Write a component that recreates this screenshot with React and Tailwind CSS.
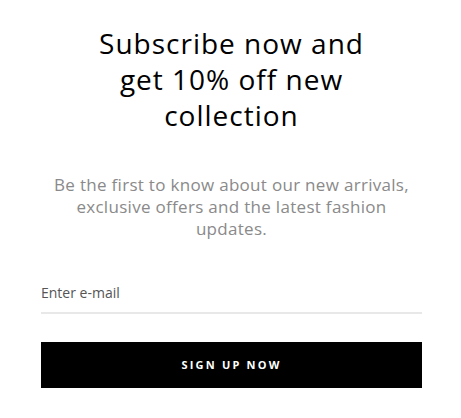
export default function App() {
  return (
    <div className="min-h-screen bg-white font-['Open_Sans','Liberation_Sans',sans-serif]">
      <section className="flex w-[461px] flex-col pl-[41px] pr-[39px] pt-[25px]">
        <h2 className="text-center text-[28px] font-normal leading-[36px] tracking-[1px] text-black">
          Subscribe now and
          <br />
          get 10% off new
          <br />
          collection
        </h2>

        <p className="mt-[41px] text-center text-[17px] leading-[22px] tracking-[0.3px] text-[#8a8a8a]">
          Be the first to know about our new arrivals,
          <br />
          exclusive offers and the latest fashion
          <br />
          updates.
        </p>

        <form className="mt-[42px] flex flex-col" onSubmit={(e) => e.preventDefault()}>
          <input
            type="email"
            placeholder="Enter e-mail"
            className="h-[32px] border-b-2 border-[#e8e8e8] bg-transparent pb-[10px] text-[14px] text-[#555] outline-none placeholder:text-[#555]"
          />
          <button
            type="submit"
            className="mt-[28px] h-[46px] w-full bg-black text-[11px] font-bold tracking-[0.2em] text-white"
          >
            SIGN UP NOW
          </button>
        </form>
      </section>
    </div>
  );
}
